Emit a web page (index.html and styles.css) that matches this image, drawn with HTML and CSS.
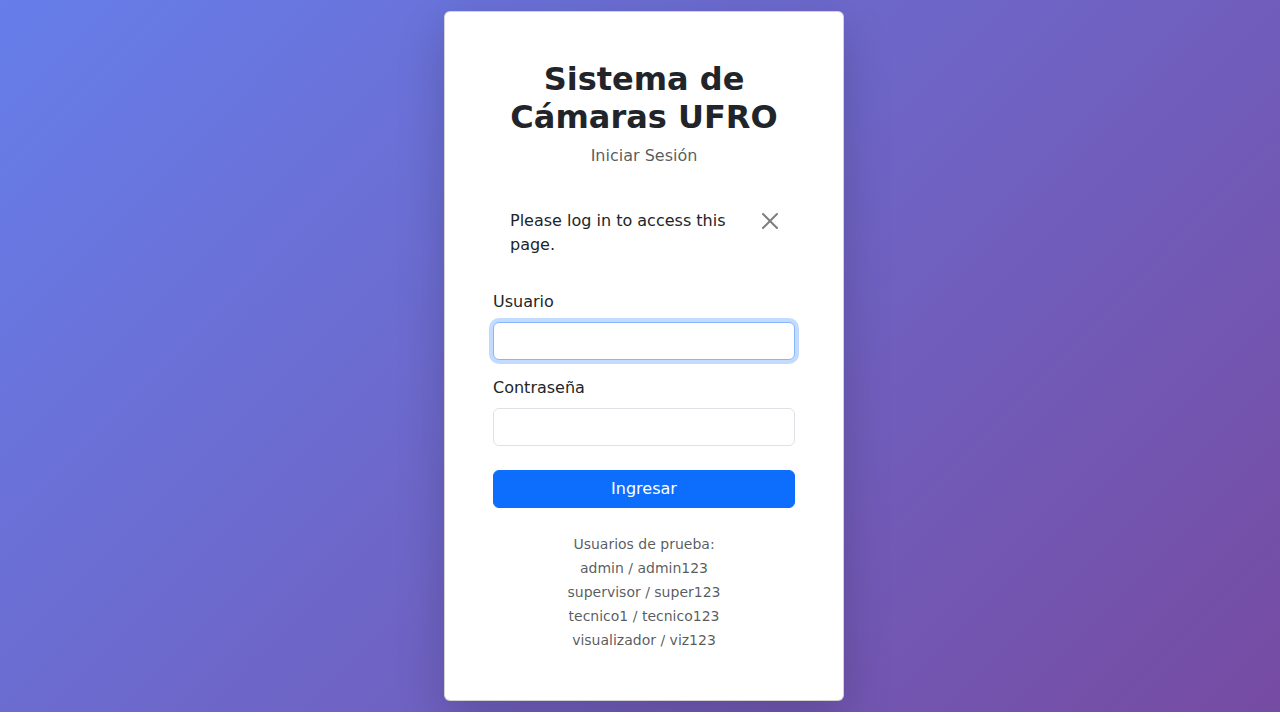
FILE: index.html
```html
<!DOCTYPE html>
<html lang="es">
<head>
  <meta charset="utf-8">
  <meta name="viewport" content="width=device-width, initial-scale=1">
  <title>Iniciar Sesión - Sistema de Cámaras UFRO</title>
  <link rel="stylesheet" href="styles.css">
</head>
<body>
  <main class="login-card">
    <header class="login-header">
      <h1 class="login-title">Sistema de Cámaras UFRO</h1>
      <p class="login-subtitle">Iniciar Sesión</p>
    </header>
    <div class="alert" role="alert">
      <span class="alert-text">Please log in to access this page.</span>
      <button class="alert-close" type="button" aria-label="Close">
        <svg class="alert-icon" viewBox="0 0 16 16" aria-hidden="true"><path d="M.293.293a1 1 0 0 1 1.414 0L8 6.586 14.293.293a1 1 0 1 1 1.414 1.414L9.414 8l6.293 6.293a1 1 0 0 1-1.414 1.414L8 9.414l-6.293 6.293a1 1 0 0 1-1.414-1.414L6.586 8 .293 1.707a1 1 0 0 1 0-1.414z"/></svg>
      </button>
    </div>
    <form class="login-form">
      <div class="field">
        <label class="field-label" for="username">Usuario</label>
        <input class="field-input" type="text" id="username" name="username" required autofocus>
      </div>
      <div class="field">
        <label class="field-label" for="password">Contraseña</label>
        <input class="field-input" type="password" id="password" name="password" required>
      </div>
      <button class="submit" type="submit">Ingresar</button>
    </form>
    <p class="hints">
      Usuarios de prueba:<br>
      admin / admin123<br>
      supervisor / super123<br>
      tecnico1 / tecnico123<br>
      visualizador / viz123
    </p>
  </main>
</body>
</html>
```

FILE: styles.css
```css
*,
*::before,
*::after {
  box-sizing: border-box;
}

html {
  background: #fff;
}

body {
  margin: 0;
  min-height: calc(100vh - 8px);
  padding-left: 8px;
  display: flex;
  align-items: center;
  justify-content: center;
  font-family: "DejaVu Sans", sans-serif;
  font-size: 16px;
  line-height: 24px;
  color: #212529;
  background: linear-gradient(135deg, #667eea 0%, #764ba2 100%);
}

.login-card {
  width: 100%;
  max-width: 400px;
  padding: 48px;
  background: #fff;
  border: 1px solid rgba(0, 0, 0, 0.175);
  border-radius: 6px;
  box-shadow: 0 16px 48px rgba(0, 0, 0, 0.175);
}

.login-header {
  margin-bottom: 24px;
  text-align: center;
}

.login-title {
  margin: 0 0 8px;
  font-size: 32px;
  font-weight: 700;
  line-height: 38px;
}

.login-subtitle {
  margin: 0;
  color: rgba(33, 37, 41, 0.75);
}

.alert {
  display: flex;
  align-items: flex-start;
  gap: 16px;
  margin-bottom: 16px;
  padding: 16px;
  border: 1px solid transparent;
  border-radius: 6px;
}

.alert-text {
  flex: 1;
}

.alert-close {
  display: flex;
  align-items: center;
  height: 24px;
  padding: 0;
  border: 0;
  background: transparent;
  color: #000;
  opacity: 0.5;
  cursor: pointer;
}

.alert-icon {
  width: 16px;
  height: 16px;
  fill: currentColor;
}

.login-form {
  display: flex;
  flex-direction: column;
}

.field {
  display: flex;
  flex-direction: column;
  gap: 8px;
  margin-bottom: 16px;
}

.field-input {
  width: 100%;
  height: 38px;
  padding: 6px 12px;
  font: inherit;
  color: inherit;
  background: #fff;
  border: 1px solid #dee2e6;
  border-radius: 6px;
}

.field-input:focus {
  outline: 0;
  border-color: #86b7fe;
  box-shadow: 0 0 0 4px rgba(13, 110, 253, 0.25);
}

.submit {
  height: 38px;
  margin-top: 8px;
  padding: 6px 12px;
  font: inherit;
  color: #fff;
  background: #0d6efd;
  border: 1px solid #0d6efd;
  border-radius: 6px;
  cursor: pointer;
}

.hints {
  margin: 24px 0 0;
  font-size: 14px;
  text-align: center;
  color: rgba(33, 37, 41, 0.75);
}
```
